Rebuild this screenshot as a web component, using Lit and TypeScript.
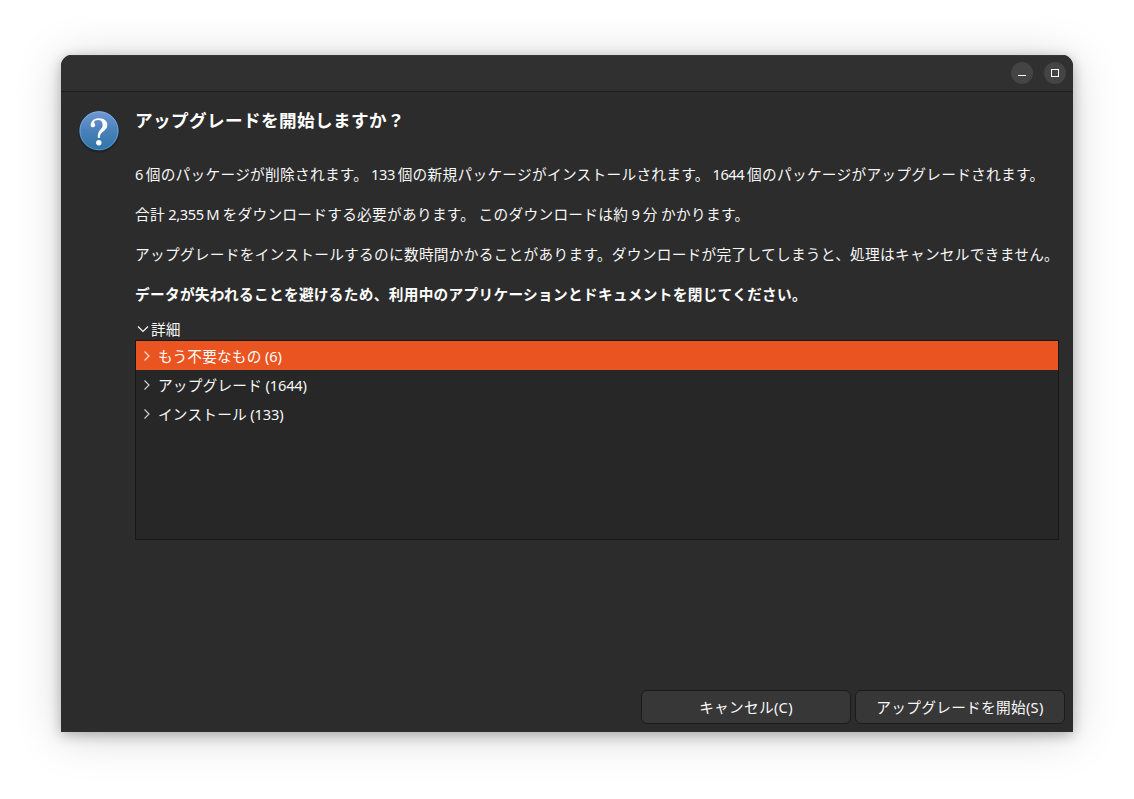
import { LitElement, html, css, svg } from "lit";
import { customElement, property } from "lit/decorators.js";

interface PackageGroup {
  label: string;
  count: number;
  selected: boolean;
}

const groups: PackageGroup[] = [
  { label: "もう不要なもの", count: 6, selected: true },
  { label: "アップグレード", count: 1644, selected: false },
  { label: "インストール", count: 133, selected: false },
];

const questionIcon = svg`
  <defs>
    <linearGradient id="ball" x1="0" y1="0" x2="0" y2="1">
      <stop offset="0" stop-color="#7096d4"></stop>
      <stop offset="0.5" stop-color="#4a81b9"></stop>
      <stop offset="1" stop-color="#2f75a8"></stop>
    </linearGradient>
    <linearGradient id="rim" x1="0" y1="0" x2="0" y2="1">
      <stop offset="0" stop-color="#8db2e6"></stop>
      <stop offset="1" stop-color="#4d94c4"></stop>
    </linearGradient>
    <radialGradient id="shade">
      <stop offset="0.85" stop-color="#000" stop-opacity="0.4"></stop>
      <stop offset="1" stop-color="#000" stop-opacity="0"></stop>
    </radialGradient>
  </defs>
  <circle cx="24" cy="25" r="21.5" fill="url(#shade)"></circle>
  <circle cx="24" cy="23.700" r="19.800" fill="#24547f"></circle>
  <circle cx="24" cy="23.700" r="19" fill="url(#ball)" stroke="url(#rim)" stroke-width="1"></circle>
  <path d="M15.700 17.900C16.100 13.900 19.300 11.300 24 11.300C29.200 11.300 32.300 14.100 32.300 18C32.300 21.200 30.500 22.900 28 24.700C25.700 26.400 24.900 27.800 24.700 31H22.900C22.600 26.800 23.400 24.900 25.300 22.800C26.900 21 27.600 19.900 27.600 17.700C27.600 14.700 26 12.900 23.300 12.900C21 12.900 19.400 13.800 19 15.200C18.900 16 20.200 16.400 20.200 18C20.200 19.300 19.300 20.200 17.900 20.200C16.500 20.200 15.600 19.300 15.700 17.900Z" fill="#fff"></path>
  <circle cx="23.800" cy="35.700" r="2.700" fill="#fff"></circle>
`;

@customElement("package-row")
export class PackageRow extends LitElement {
  @property() label = "";
  @property({ type: Number }) count = 0;

  static styles = css`
    :host { display: flex; align-items: center; height: 29px; color: #f7f7f7; }
    :host([selected]) { background: #e95420; color: #fff; }
    .arrow { width: 8px; height: 12px; margin: 0 7px 0 7px; fill: none; stroke: currentColor; stroke-width: 1.2; opacity: 0.8; flex: none; }
    .label { white-space: nowrap; line-height: 20px; padding-top: 1px; letter-spacing: 0.2px; word-spacing: -0.6px; }
    .count { letter-spacing: -0.15px; }
  `;

  render() {
    return html`<svg class="arrow" viewBox="0 0 8 12"><path d="M1.500 1.500L6 6L1.500 10.500"></path></svg><span class="label">${this.label} <span class="count">(${this.count})</span></span>`;
  }
}

@customElement("app-root")
export class AppRoot extends LitElement {
  static styles = css`
    :host {
      display: block; box-sizing: border-box; width: 1134px; height: 799px;
      padding: 55px 61px 67px; background: #fff; overflow: hidden;
      font: 14.667px/20px "Noto Sans", "Noto Sans CJK JP", sans-serif; color: #f7f7f7;
    }
    .window {
      display: flex; flex-direction: column; box-sizing: border-box; height: 677px;
      background: #2c2c2c; border-radius: 11px 11px 0 0; overflow: hidden;
    }
    .frame { border-radius: 11px 11px 0 0; box-shadow: 0 3px 13px rgba(0,0,0,.28), 0 4px 46px rgba(0,0,0,.17); }
    .bar {
      display: flex; justify-content: flex-end; align-items: center; gap: 11px;
      box-sizing: border-box; height: 37px; padding: 0 7px 0 0;
      background: #303030; border-bottom: 1px solid #1d1d1d; box-shadow: inset 0 1px #383838;
    }
    .ctl { width: 22px; height: 22px; border-radius: 50%; background: #444; }
    .ctl svg { display: block; }
    .body { display: flex; flex: 1; padding: 15px 14px 0 14px; }
    .icon { width: 48px; height: 48px; flex: none; }
    .content { flex: 1; min-width: 0; margin-left: 12px; }
    .title { margin: 0 0 31px; font-size: 17.6px; line-height: 26px; font-weight: 700; color: #fff; letter-spacing: 0.4px; white-space: nowrap; }
    .text { margin: 0 0 20px; white-space: nowrap; letter-spacing: 0.3px; }
    .num { letter-spacing: -0.4px; }
    .counts { word-spacing: -1.4px; }
    .download { word-spacing: -0.8px; }
    .strong { font-weight: 700; color: #fff; margin-bottom: 15px; letter-spacing: 0.31px; }
    .expander { display: flex; align-items: center; height: 20px; }
    .chevron { width: 12px; height: 8px; margin: 0 2px 1px 2px; fill: none; stroke: #f7f7f7; stroke-width: 1.2; }
    .list { box-sizing: border-box; height: 200px; margin-top: 1px; border: 1px solid #181818; background: #272727; }
    .actions { display: flex; justify-content: flex-end; gap: 4px; padding: 0 8px 8px; }
    .button {
      box-sizing: border-box; width: 210px; height: 34px; padding: 0; border: 1px solid #1b1b1b;
      border-radius: 6px; background: #373737; color: #f7f7f7; font: inherit; letter-spacing: 0.3px;
    }
  `;

  render() {
    return html`
      <div class="frame">
        <div class="window">
          <header class="bar">
            <div class="ctl"><svg width="22" height="22"><path d="M7 13.500H15" stroke="#fff"></path></svg></div>
            <div class="ctl"><svg width="22" height="22"><rect x="7.500" y="7.500" width="7" height="7" fill="none" stroke="#fff"></rect></svg></div>
          </header>
          <main class="body">
            <svg class="icon" viewBox="0 0 48 48">${questionIcon}</svg>
            <div class="content">
              <h1 class="title">アップグレードを開始しますか？</h1>
              <p class="text counts"><span class="num">6</span> 個のパッケージが削除されます。 <span class="num">133</span> 個の新規パッケージがインストールされます。 <span class="num">1644</span> 個のパッケージがアップグレードされます。</p>
              <p class="text download">合計 <span class="num">2,355 M</span> をダウンロードする必要があります。 このダウンロードは約 <span class="num">9</span> 分 かかります。</p>
              <p class="text">アップグレードをインストールするのに数時間かかることがあります。ダウンロードが完了してしまうと、処理はキャンセルできません。</p>
              <p class="text strong">データが失われることを避けるため、利用中のアプリケーションとドキュメントを閉じてください。</p>
              <div class="expander">
                <svg class="chevron" viewBox="0 0 12 8"><path d="M1 1.500L6 6.500L11 1.500"></path></svg>
                <span>詳細</span>
              </div>
              <div class="list">
                ${groups.map((g) => html`<package-row .label=${g.label} .count=${g.count} ?selected=${g.selected}></package-row>`)}
              </div>
            </div>
          </main>
          <footer class="actions">
            <button class="button">キャンセル(C)</button>
            <button class="button">アップグレードを開始(S)</button>
          </footer>
        </div>
      </div>
    `;
  }
}
